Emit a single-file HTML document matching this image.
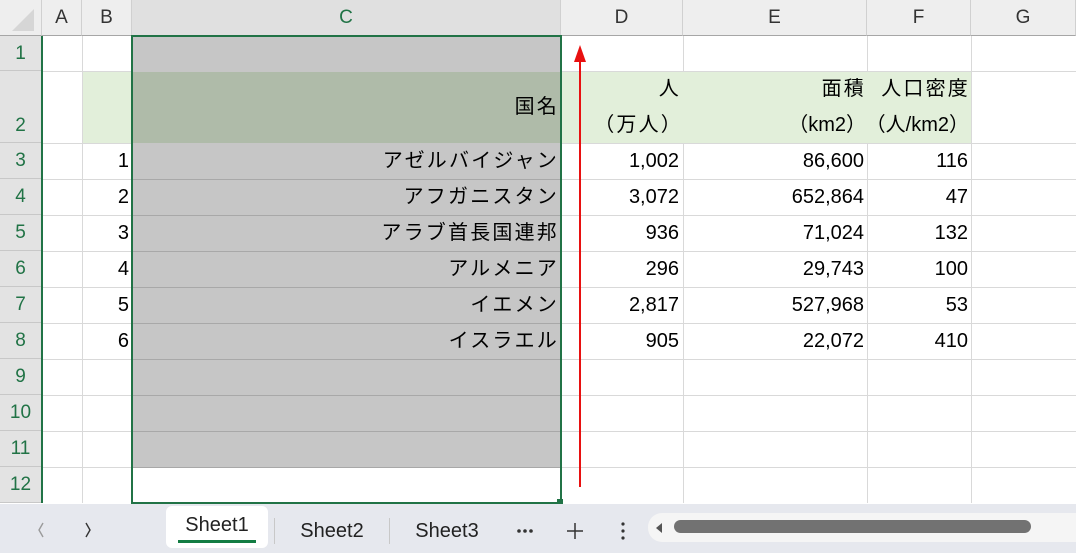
<!DOCTYPE html>
<html><head><meta charset="utf-8"><style>
*{margin:0;padding:0;box-sizing:border-box}
body{width:1076px;height:553px;overflow:hidden;background:#fff;position:relative;font-family:"Liberation Sans","Noto Sans CJK JP",sans-serif;color:#000}
.a{position:absolute}
.hl{position:absolute;height:1px;background:#d9d9d9}
.vl{position:absolute;width:1px;background:#d9d9d9}
.ch{position:absolute;top:0;height:36px;line-height:36px;text-align:center;font-size:19px;color:#333;background:#eeeeee;border-right:1px solid #d0d0d0;border-bottom:1px solid #a6a6a6}
.rh{position:absolute;left:0;width:41px;text-align:center;font-size:19px;color:#217346;background:#e3e3e3;border-bottom:1px solid #c8c8c8}
.t{position:absolute;font-size:20px;text-align:right;line-height:36px;height:36px;white-space:nowrap}
.j{letter-spacing:2.2px;margin-right:-2px}
</style></head><body>
<div class="ch" style="left:0;width:42px;background:#eeeeee"></div>
<svg class="a" style="left:8px;top:5px" width="28" height="28"><polygon points="26,4 26,26 4,26" fill="#d6d6d6"/></svg>
<div class="ch" style="left:42px;width:40px">A</div>
<div class="ch" style="left:82px;width:50px">B</div>
<div class="ch" style="left:132px;width:429px;background:#e0e0e0;color:#217346">C</div>
<div class="ch" style="left:561px;width:122px">D</div>
<div class="ch" style="left:683px;width:184px">E</div>
<div class="ch" style="left:867px;width:104px">F</div>
<div class="ch" style="left:971px;width:105px">G</div>

<div class="rh" style="top:36px;height:35px;line-height:35px">1</div>
<div class="rh" style="top:71px;height:72px;line-height:110px">2</div>
<div class="rh" style="top:143px;height:36px;line-height:36px">3</div>
<div class="rh" style="top:179px;height:36px;line-height:36px">4</div>
<div class="rh" style="top:215px;height:36px;line-height:36px">5</div>
<div class="rh" style="top:251px;height:36px;line-height:36px">6</div>
<div class="rh" style="top:287px;height:36px;line-height:36px">7</div>
<div class="rh" style="top:323px;height:36px;line-height:36px">8</div>
<div class="rh" style="top:359px;height:36px;line-height:36px">9</div>
<div class="rh" style="top:395px;height:36px;line-height:36px">10</div>
<div class="rh" style="top:431px;height:36px;line-height:36px">11</div>
<div class="rh" style="top:467px;height:36px;line-height:36px">12</div>
<div class="a" style="left:41px;top:36px;width:2px;height:467px;background:#217346"></div>

<div class="hl" style="left:43px;top:71px;width:1033px"></div>
<div class="hl" style="left:43px;top:143px;width:1033px"></div>
<div class="hl" style="left:43px;top:179px;width:1033px"></div>
<div class="hl" style="left:43px;top:215px;width:1033px"></div>
<div class="hl" style="left:43px;top:251px;width:1033px"></div>
<div class="hl" style="left:43px;top:287px;width:1033px"></div>
<div class="hl" style="left:43px;top:323px;width:1033px"></div>
<div class="hl" style="left:43px;top:359px;width:1033px"></div>
<div class="hl" style="left:43px;top:395px;width:1033px"></div>
<div class="hl" style="left:43px;top:431px;width:1033px"></div>
<div class="hl" style="left:43px;top:467px;width:1033px"></div>
<div class="vl" style="left:82px;top:36px;height:467px"></div>
<div class="vl" style="left:683px;top:36px;height:467px"></div>
<div class="vl" style="left:867px;top:36px;height:467px"></div>
<div class="vl" style="left:971px;top:36px;height:467px"></div>

<div class="a" style="left:83px;top:72px;width:888px;height:71px;background:#e2efda"></div>

<div class="a" style="left:133px;top:37px;width:427px;height:430px;background:#c6c6c6"></div>
<div class="a" style="left:133px;top:72px;width:427px;height:71px;background:#afbba9"></div>
<div class="a" style="left:133px;top:179px;width:427px;height:1px;background:#a8a8a8"></div>
<div class="a" style="left:133px;top:215px;width:427px;height:1px;background:#a8a8a8"></div>
<div class="a" style="left:133px;top:251px;width:427px;height:1px;background:#a8a8a8"></div>
<div class="a" style="left:133px;top:287px;width:427px;height:1px;background:#a8a8a8"></div>
<div class="a" style="left:133px;top:323px;width:427px;height:1px;background:#a8a8a8"></div>
<div class="a" style="left:133px;top:359px;width:427px;height:1px;background:#a8a8a8"></div>
<div class="a" style="left:133px;top:395px;width:427px;height:1px;background:#a8a8a8"></div>
<div class="a" style="left:133px;top:431px;width:427px;height:1px;background:#a8a8a8"></div>
<div class="a" style="left:133px;top:467px;width:427px;height:1px;background:#a8a8a8"></div>
<div class="a" style="left:131px;top:35px;width:431px;height:469px;border:2px solid #217346"></div>
<div class="a" style="left:557px;top:499px;width:6px;height:6px;background:#217346"></div>

<div class="t" style="left:133px;width:424px;top:89px"><span class="j">国名</span></div>
<div class="t" style="left:561px;width:118px;top:71px"><span class="j">人</span></div>
<div class="t" style="left:561px;width:120px;top:107px"><span class="j">（万人）</span></div>
<div class="t" style="left:683px;width:181px;top:71px"><span class="j">面積</span></div>
<div class="t" style="left:683px;width:183px;top:107px">（km2）</div>
<div class="t" style="left:867px;width:101px;top:71px"><span class="j">人口密度</span></div>
<div class="t" style="left:860px;width:109px;top:107px">（人/km2）</div>

<div class="t" style="left:83px;width:46px;top:143px">1</div>
<div class="t" style="left:83px;width:46px;top:179px">2</div>
<div class="t" style="left:83px;width:46px;top:215px">3</div>
<div class="t" style="left:83px;width:46px;top:251px">4</div>
<div class="t" style="left:83px;width:46px;top:287px">5</div>
<div class="t" style="left:83px;width:46px;top:323px">6</div>

<div class="t" style="left:133px;width:424px;top:143px"><span class="j">アゼルバイジャン</span></div>
<div class="t" style="left:133px;width:424px;top:179px"><span class="j">アフガニスタン</span></div>
<div class="t" style="left:133px;width:424px;top:215px"><span class="j">アラブ首長国連邦</span></div>
<div class="t" style="left:133px;width:424px;top:251px"><span class="j">アルメニア</span></div>
<div class="t" style="left:133px;width:424px;top:287px"><span class="j">イエメン</span></div>
<div class="t" style="left:133px;width:424px;top:323px"><span class="j">イスラエル</span></div>

<div class="t" style="left:561px;width:118px;top:143px">1,002</div>
<div class="t" style="left:561px;width:118px;top:179px">3,072</div>
<div class="t" style="left:561px;width:118px;top:215px">936</div>
<div class="t" style="left:561px;width:118px;top:251px">296</div>
<div class="t" style="left:561px;width:118px;top:287px">2,817</div>
<div class="t" style="left:561px;width:118px;top:323px">905</div>

<div class="t" style="left:683px;width:181px;top:143px">86,600</div>
<div class="t" style="left:683px;width:181px;top:179px">652,864</div>
<div class="t" style="left:683px;width:181px;top:215px">71,024</div>
<div class="t" style="left:683px;width:181px;top:251px">29,743</div>
<div class="t" style="left:683px;width:181px;top:287px">527,968</div>
<div class="t" style="left:683px;width:181px;top:323px">22,072</div>

<div class="t" style="left:867px;width:101px;top:143px">116</div>
<div class="t" style="left:867px;width:101px;top:179px">47</div>
<div class="t" style="left:867px;width:101px;top:215px">132</div>
<div class="t" style="left:867px;width:101px;top:251px">100</div>
<div class="t" style="left:867px;width:101px;top:287px">53</div>
<div class="t" style="left:867px;width:101px;top:323px">410</div>

<svg class="a" style="left:570px;top:40px" width="20" height="450">
<line x1="10" y1="10" x2="10" y2="447" stroke="#e81010" stroke-width="2"/>
<polygon points="10,5 4,22 16,22" fill="#e81010"/>
</svg>

<div class="a" style="left:0;top:504px;width:1076px;height:49px;background:#e6e8ee"></div>
<svg class="a" style="left:30px;top:518px" width="70" height="24">
<polyline points="13,5 9,12 13,19" fill="none" stroke="#9a9a9a" stroke-width="1.4"/>
<polyline points="56,5 60,12 56,19" fill="none" stroke="#333" stroke-width="1.4"/>
</svg>
<div class="a" style="left:166px;top:506px;width:102px;height:42px;background:#fff;border-radius:6px"></div>
<div class="a" style="left:166px;top:504px;width:102px;height:40px;line-height:42px;text-align:center;font-size:20px;color:#222">Sheet1</div>
<div class="a" style="left:178px;top:540px;width:78px;height:3px;background:#137c43"></div>
<div class="a" style="left:274px;top:518px;width:1px;height:26px;background:#c8c8c8"></div>
<div class="a" style="left:285px;top:510px;width:94px;height:40px;line-height:42px;text-align:center;font-size:20px;color:#222">Sheet2</div>
<div class="a" style="left:389px;top:518px;width:1px;height:26px;background:#c8c8c8"></div>
<div class="a" style="left:400px;top:510px;width:94px;height:40px;line-height:42px;text-align:center;font-size:20px;color:#222">Sheet3</div>
<svg class="a" style="left:515px;top:520px" width="130" height="22">
<circle cx="4" cy="11" r="1.8" fill="#333"/><circle cx="10" cy="11" r="1.8" fill="#333"/><circle cx="16" cy="11" r="1.8" fill="#333"/>
<line x1="60" y1="3" x2="60" y2="19" stroke="#333" stroke-width="1.5"/>
<line x1="52" y1="11" x2="68" y2="11" stroke="#333" stroke-width="1.5"/>
<circle cx="108" cy="4" r="1.6" fill="#333"/><circle cx="108" cy="11" r="1.6" fill="#333"/><circle cx="108" cy="18" r="1.6" fill="#333"/>
</svg>
<div class="a" style="left:648px;top:513px;width:428px;height:29px;background:#f5f5f5;border-radius:14px 0 0 14px"></div>
<svg class="a" style="left:652px;top:520px" width="14" height="16"><polygon points="10,3 4,8 10,13" fill="#555"/></svg>
<div class="a" style="left:674px;top:520px;width:357px;height:13px;background:#727272;border-radius:7px"></div>
</body></html>
